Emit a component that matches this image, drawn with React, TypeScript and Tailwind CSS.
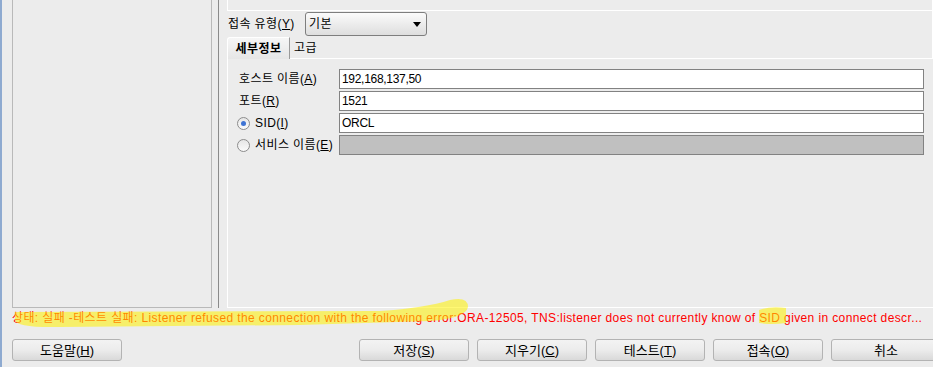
import type { ReactNode } from "react";

function Mn({ children }: { children: ReactNode }) {
  return <span className="underline underline-offset-1">{children}</span>;
}

function Radio({ checked }: { checked?: boolean }) {
  return (
    <span className="-ml-[2px] mr-[5px] flex h-[13px] w-[13px] items-center justify-center rounded-full border border-[#8c8c8c] bg-linear-to-b from-[#e6e6e6] to-[#fbfbfb]">
      {checked && <span className="h-[5px] w-[5px] rounded-full bg-[#3f74d4]" />}
    </span>
  );
}

function Field({ label, value, disabled }: { label: ReactNode; value?: string; disabled?: boolean }) {
  return (
    <div className="flex h-[20px] items-center">
      <div className="flex w-[100px] items-center">{label}</div>
      <div
        className={
          disabled
            ? "flex h-[20px] flex-1 items-center border border-[#828282] bg-[#c0c0c0] px-[2px]"
            : "flex h-[20px] flex-1 items-center border border-[#828282] bg-white px-[2px] tracking-[-0.3px]"
        }
      >
        {value}
      </div>
    </div>
  );
}

function Btn({ children }: { children: ReactNode }) {
  return (
    <div className="flex h-[22px] w-[110px] shrink-0 items-center justify-center rounded-[3px] border border-[#b3b3b3] bg-linear-to-b from-[#f3f3f3] via-[#ececec] to-[#d9d9d9] text-[13px]">
      {children}
    </div>
  );
}

export default function App() {
  return (
    <div className="relative flex h-[367px] w-[933px] overflow-hidden bg-[#ececec] font-['Liberation_Sans','Noto_Sans_CJK_KR',sans-serif] text-[12px] leading-none tracking-[0.4px] text-black">
      <div className="w-[2px] shrink-0 bg-[#8eaad0]" />

      <div className="flex min-w-0 flex-1 flex-col">
        <div className="flex h-[308px]">
          {/* connection list */}
          <div className="ml-[10px] h-full w-[200px] border-x border-b border-[#b9b9b9]" />
          {/* splitter */}
          <div className="ml-[6px] w-px bg-[#8a8a8a]" />

          <div className="ml-[8px] flex flex-1 flex-col">
            <div className="flex flex-col border-r border-white">
              <div className="h-[11px] border-b border-l border-white" />
              <div className="mt-[1px] flex h-[24px] items-center">
                <div className="w-[78px] pl-[1px]">
                  접속 유형(<Mn>Y</Mn>)
                </div>
                <div className="flex h-[24px] w-[122px] items-center justify-between rounded-[3px] border border-[#7e7e7e] bg-linear-to-b from-[#fbfbfb] to-[#dedede] pl-[3px] pr-[5px]">
                  <span>기본</span>
                  <svg width="8" height="5" viewBox="0 0 8 5">
                    <path d="M0 0 L8 0 L4 5 Z" fill="#000" />
                  </svg>
                </div>
              </div>
              <div className="mt-[1px] flex h-[22px] items-stretch">
                <div className="flex w-[63px] items-center justify-center rounded-tl-[3px] border-l border-r border-t border-l-white border-r-[#9a9a9a] border-t-white bg-linear-to-b from-[#f6f6f6] to-[#e6e6e6] font-bold">
                  세부정보
                </div>
                <div className="flex items-center border-b border-white px-[4px]">고급</div>
                <div className="flex-1 border-b border-white" />
              </div>
            </div>

            {/* tab body */}
            <div className="flex flex-1 flex-col gap-[2px] border-b border-l border-white pl-[11px] pr-[9px] pt-[10px]">
              <Field
                label={
                  <span>
                    호스트 이름(<Mn>A</Mn>)
                  </span>
                }
                value="192,168,137,50"
              />
              <Field
                label={
                  <span>
                    포트(<Mn>R</Mn>)
                  </span>
                }
                value="1521"
              />
              <Field
                label={
                  <>
                    <Radio checked />
                    <span>
                      SID(<Mn>I</Mn>)
                    </span>
                  </>
                }
                value="ORCL"
              />
              <Field
                label={
                  <>
                    <Radio />
                    <span>
                      서비스 이름(<Mn>E</Mn>)
                    </span>
                  </>
                }
                disabled
              />
            </div>
          </div>
        </div>

        {/* status */}
        <div className="flex h-[20px] items-center whitespace-nowrap pl-[10px] tracking-[0.38px] text-[#ff0000]">
          상태: 실패 -테스트 실패: Listener refused the connection with the following error:ORA-12505, TNS:listener does not currently know of SID given in connect descr...
        </div>

        <div className="mt-[11px] flex tracking-normal">
          <div className="ml-[10px]">
            <Btn>
              도움말(<Mn>H</Mn>)
            </Btn>
          </div>
          <div className="ml-[237px] flex gap-[8px]">
            <Btn>
              저장(<Mn>S</Mn>)
            </Btn>
            <Btn>
              지우기(<Mn>C</Mn>)
            </Btn>
            <Btn>
              테스트(<Mn>T</Mn>)
            </Btn>
            <Btn>
              접속(<Mn>O</Mn>)
            </Btn>
            <Btn>취소</Btn>
          </div>
        </div>
      </div>

      {/* highlighter marks drawn over the status line */}
      <svg className="pointer-events-none absolute left-0 top-0" width="933" height="367" viewBox="0 0 933 367">
        <path
          d="M15 312 L380 311 Q425 308 450 300 Q468 296 468 307 Q466 318 430 321 L300 325 L60 327 Q16 328 15 320 Z"
          fill="#fff200"
          fillOpacity="0.55"
        />
        <path d="M759 310 Q770 306 786 308 L786 323 Q772 325 759 323 Z" fill="#fff200" fillOpacity="0.55" />
      </svg>
    </div>
  );
}
